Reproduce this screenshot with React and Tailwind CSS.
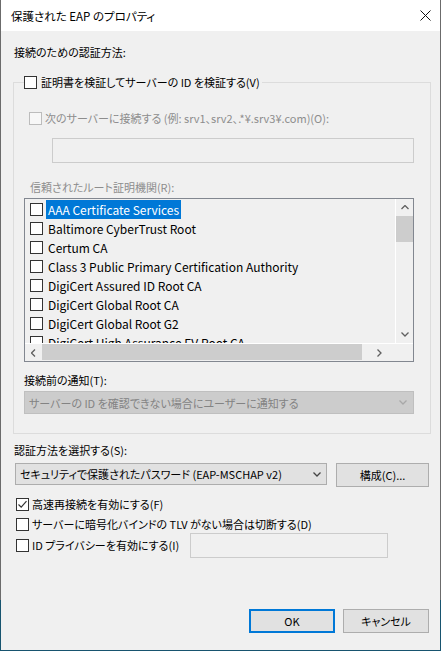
import React from "react";

const Box = ({ checked, disabled }) => (
  <span
    className={
      disabled
        ? "inline-flex w-[13px] h-[13px] shrink-0 border border-[#bcbcbc] bg-[#f7f7f7]"
        : "inline-flex w-[13px] h-[13px] shrink-0 border border-[#333333] bg-white items-center justify-center"
    }
  >
    {checked && (
      <svg width="11" height="11" viewBox="0 0 11 11">
        <path d="M1.5 5.5 L4.2 8.2 L9.5 2.2" fill="none" stroke="#333" strokeWidth="1.2" />
      </svg>
    )}
  </span>
);

const Chevron = ({ color = "#606060", dir = "down" }) => {
  const d =
    dir === "down"
      ? "M0.5 0.5 L4 4 L7.5 0.5"
      : dir === "up"
      ? "M0.5 4 L4 0.5 L7.5 4"
      : dir === "left"
      ? "M4 0.5 L0.5 4 L4 7.5"
      : "M0.5 0.5 L4 4 L0.5 7.5";
  const w = dir === "down" || dir === "up" ? 8 : 5;
  const h = dir === "down" || dir === "up" ? 5 : 8;
  return (
    <svg width={w} height={h} viewBox={`0 0 ${w} ${h}`}>
      <path d={d} fill="none" stroke={color} strokeWidth="1.3" />
    </svg>
  );
};

export default function App() {
  const items = [
    "AAA Certificate Services",
    "Baltimore CyberTrust Root",
    "Certum CA",
    "Class 3 Public Primary Certification Authority",
    "DigiCert Assured ID Root CA",
    "DigiCert Global Root CA",
    "DigiCert Global Root G2",
    "DigiCert High Assurance EV Root CA",
  ];
  return (
    <div className="w-[441px] h-[651px] overflow-hidden px-px pb-px bg-[linear-gradient(to_bottom,#6b6b6b_0px,#6b6b6b_600px,#17546f_600px)] font-['Noto_Sans_CJK_JP','Noto_Sans',sans-serif] [font-feature-settings:'palt'] text-[11px] leading-[16px] text-black">
      <div className="h-full bg-[#f0f0f0] flex flex-col">
        {/* title bar */}
        <div className="h-[31px] shrink-0 bg-white flex items-center justify-between pl-[10px] pr-[9px]">
          <span className="text-[11.5px]">保護された EAP のプロパティ</span>
          <svg width="11" height="11" viewBox="0 0 11 11">
            <path d="M0.5 0.5 L10.5 10.5 M10.5 0.5 L0.5 10.5" stroke="#111" strokeWidth="1" />
          </svg>
        </div>

        <div className="flex flex-col pl-[12px] pr-[9px]">
          <div className="mt-[13px] pl-px">接続のための認証方法:</div>

          <fieldset className="mt-[13px] border border-[#dcdcdc] px-[10px] pb-[19px]">
            <legend className="flex items-center h-[18px] gap-[4px] pr-[2px]">
              <Box />
              <span>証明書を検証してサーバーの ID を検証する(V)</span>
            </legend>

            <div className="mt-[19px] ml-[5px] flex items-center gap-[3px] text-[#8d8d8d]">
              <Box disabled />
              <span>次のサーバーに接続する (例: srv1、srv2、.*¥.srv3¥.com)(O):</span>
            </div>

            <div className="mt-[12px] ml-[28px] w-[362px] h-[25px] border border-[#cccccc] bg-[#f0f0f0]" />

            <div className="mt-[16px] ml-[6px] text-[#8d8d8d]">信頼されたルート証明機関(R):</div>

            <div className="mt-[3px] w-[390px] h-[164px] border border-[#828790] flex flex-col bg-[#f0f0f0] text-[12px]">
              <div className="flex h-[144px]">
                <div className="flex-1 flex flex-col pt-px overflow-hidden border-r border-white">
                  {items.map((t, i) => (
                    <div key={t} className="h-[19px] shrink-0 flex items-center pl-[5px] whitespace-nowrap">
                      <Box />
                      <span
                        className={
                          i === 0
                            ? "ml-[3px] h-[19px] flex items-center px-[2px] bg-[#0078d7] text-white"
                            : "ml-[3px] h-[19px] flex items-center px-[2px]"
                        }
                      >
                        {t}
                      </span>
                    </div>
                  ))}
                </div>
                <div className="w-[17px] shrink-0 flex flex-col items-center">
                  <div className="h-[17px] flex items-center justify-center">
                    <Chevron dir="up" />
                  </div>
                  <div className="w-[17px] h-[26px] bg-[#cdcdcd]" />
                  <div className="flex-1" />
                  <div className="h-[17px] flex items-center justify-center">
                    <Chevron dir="down" />
                  </div>
                </div>
              </div>
              <div className="flex h-[18px] border-t border-white">
                <div className="w-[17px] flex items-center justify-center">
                  <Chevron dir="left" />
                </div>
                <div className="w-[320px] h-[16px] bg-[#cdcdcd]" />
                <div className="flex-1 flex items-center justify-center">
                  <Chevron dir="right" />
                </div>
                <div className="w-[17px]" />
              </div>
            </div>

            <div className="mt-[10px]">接続前の通知(T):</div>

            <div className="mt-[3px] w-[390px] h-[23px] border border-[#bfbfbf] bg-[#cccccc] flex items-center justify-between pl-[4px] pr-[6px] text-[#838383]">
              <span>サーバーの ID を確認できない場合にユーザーに通知する</span>
              <Chevron color="#a8a8a8" />
            </div>
          </fieldset>

          <div className="mt-[8px] pl-px">認証方法を選択する(S):</div>

          <div className="mt-[5px] flex items-start">
            <div className="ml-[2px] w-[312px] h-[22px] border border-[#adadad] bg-[#e1e1e1] flex items-center justify-between pl-[4px] pr-[5px]">
              <span>セキュリティで保護されたパスワード (EAP-MSCHAP v2)</span>
              <Chevron color="#444" />
            </div>
            <div className="ml-[9px] w-[93px] h-[24px] border border-[#adadad] bg-[#e1e1e1] flex items-center justify-center">
              構成(C)...
            </div>
          </div>

          <div className="mt-[9px] ml-[3px] flex items-center gap-[3px] h-[16px]">
            <Box checked />
            <span>高速再接続を有効にする(F)</span>
          </div>
          <div className="mt-[4px] ml-[3px] flex items-center gap-[3px] h-[16px]">
            <Box />
            <span>サーバーに暗号化バインドの TLV がない場合は切断する(D)</span>
          </div>
          <div className="mt-[5px] ml-[3px] flex items-center h-[16px]">
            <Box />
            <span className="ml-[3px] w-[158px] shrink-0 whitespace-nowrap">ID プライバシーを有効にする(I)</span>
            <div className="mt-[1px] w-[198px] h-[25px] shrink-0 border border-[#cccccc] bg-[#f0f0f0]" />
          </div>
        </div>

        <div className="mt-auto mb-[17px] flex justify-end gap-[8px] pr-[11px]">
          <div className="w-[86px] h-[24px] border-2 border-[#0078d7] bg-[#e1e1e1] flex items-center justify-center">
            OK
          </div>
          <div className="w-[86px] h-[24px] border border-[#adadad] bg-[#e1e1e1] flex items-center justify-center">
            キャンセル
          </div>
        </div>
      </div>
    </div>
  );
}
